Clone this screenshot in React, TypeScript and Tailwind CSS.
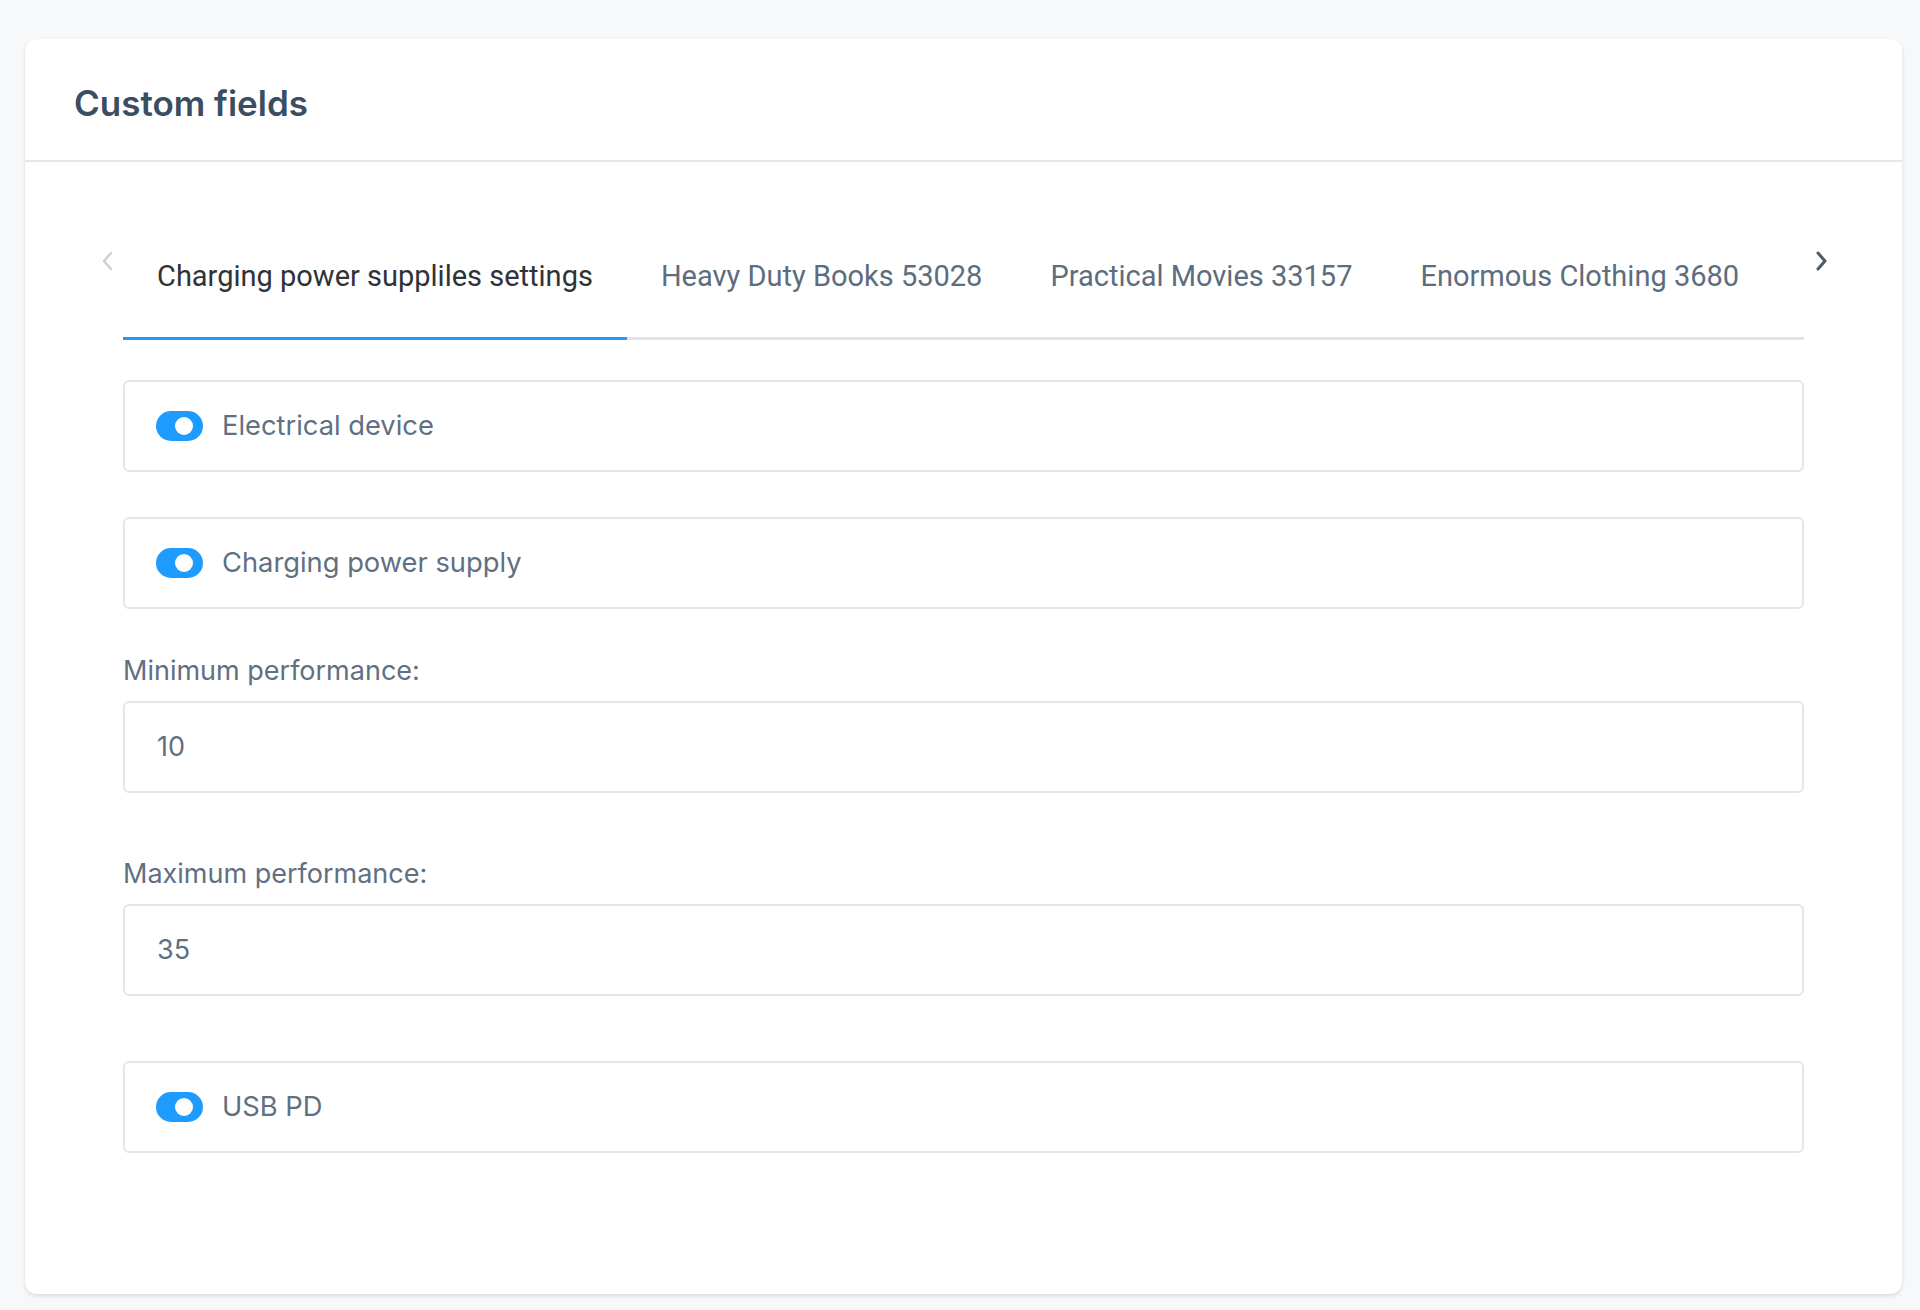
import React from "react";

const Toggle = () => (
  <div className="flex h-[30px] w-[47px] shrink-0 items-center justify-end rounded-full bg-[#1e9bff] pr-[10px]">
    <div className="h-[18px] w-[18px] rounded-full bg-white" />
  </div>
);

const SwitchRow = ({ label }: { label: string }) => (
  <div className="flex h-[92px] items-center gap-[19px] rounded-[6px] border-2 border-[#e1e6ec] px-[31px]">
    <Toggle />
    <span className="text-[27.3px] text-[#5f7083]">{label}</span>
  </div>
);

const NumberField = ({ label, value }: { label: string; value: string }) => (
  <div className="flex flex-col">
    <label className="text-[27px] leading-[36px] text-[#5f7083]">{label}</label>
    <div className="mt-[12px] flex h-[92px] items-center rounded-[6px] border-2 border-[#e1e6ec] px-[32px]">
      <span className="text-[27px] text-[#5f7083]">{value}</span>
    </div>
  </div>
);

export default function App() {
  const tabs = [
    "Charging power suppliles settings",
    "Heavy Duty Books 53028",
    "Practical Movies 33157",
    "Enormous Clothing 3680",
  ];
  return (
    <div
      className="min-h-[1310px] bg-[#f6f8fa] pb-[16px] pl-[25px] pt-[39px]"
      style={{ fontFamily: "Inter, 'Noto Sans', sans-serif" }}
    >
      <div className="flex h-[1255px] w-[1877px] flex-col rounded-[12px] bg-white shadow-[0_2px_4px_rgba(0,0,0,0.12)]">
        <div className="flex h-[123px] items-center border-b-2 border-[#e3e8ee] px-[49px]">
          <h2 className="pt-[8px] text-[35px] font-semibold text-[#3b4d61]">Custom fields</h2>
        </div>
        <div className="px-[98px] pt-[50px]">
          <div className="-mx-[24px] flex items-start">
            <div className="flex w-[24px] justify-start pl-[2px] pt-[38px] text-[#c9d0d8]">
              <svg width="14" height="22" viewBox="0 0 14 22" fill="none">
                <path d="M10 3 L3 11 L10 19" stroke="currentColor" strokeWidth="2.5" strokeLinecap="round" strokeLinejoin="round" />
              </svg>
            </div>
            <div
              className="flex flex-1 border-b-[3px] border-[#dfe4ea]"
              style={{ fontFamily: "Roboto, sans-serif" }}
            >
              {tabs.map((t, i) => (
                <div
                  key={t}
                  className={
                    i === 0
                      ? "-mb-[3px] border-b-[3px] border-[#1e9bff] px-[34px] pb-[46px] pt-[49px] text-[29px] leading-[30px] text-[#2f3338]"
                      : "-mb-[3px] border-b-[3px] border-transparent px-[34px] pb-[46px] pt-[49px] text-[29px] leading-[30px] text-[#5c6d80]"
                  }
                >
                  {t}
                </div>
              ))}
            </div>
            <div className="flex w-[24px] justify-end pr-[0px] pt-[38px] text-[#4a5b6f]">
              <svg width="14" height="22" viewBox="0 0 14 22" fill="none">
                <path d="M4 3 L11 11 L4 19" stroke="currentColor" strokeWidth="3" strokeLinecap="round" strokeLinejoin="round" />
              </svg>
            </div>
          </div>
          <div className="mt-[40px] flex flex-col">
            <SwitchRow label="Electrical device" />
            <div className="mt-[45px]">
              <SwitchRow label="Charging power supply" />
            </div>
            <div className="mt-[44px]">
              <NumberField label="Minimum performance:" value="10" />
            </div>
            <div className="mt-[63px]">
              <NumberField label="Maximum performance:" value="35" />
            </div>
            <div className="mt-[65px]">
              <SwitchRow label="USB PD" />
            </div>
          </div>
        </div>
      </div>
    </div>
  );
}
